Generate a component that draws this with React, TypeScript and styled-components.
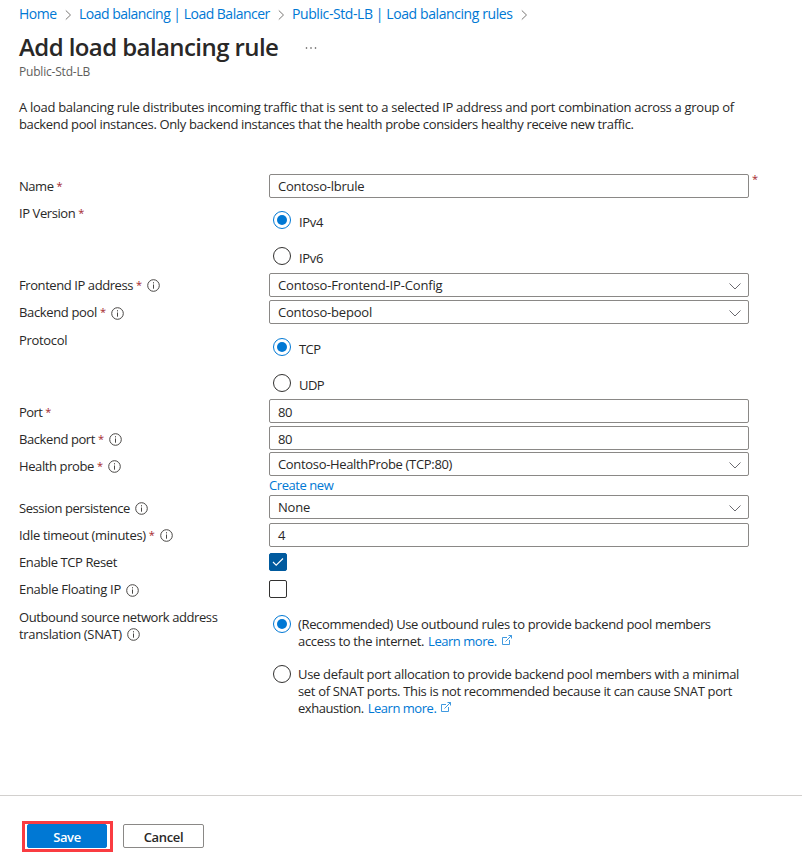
import React from "react";
import styled, { createGlobalStyle } from "styled-components";

const GlobalStyle = createGlobalStyle`
  * { box-sizing: border-box; }
  body {
    margin: 0;
    background: #fff;
    color: #292827;
    font: 400 13px/17px "Open Sans", "Noto Sans", sans-serif;
  }
`;

const Page = styled.div`
  width: 802px;
  height: 860px;
  display: flex;
  flex-direction: column;
  overflow: hidden;
`;

const Text = styled.span<{ $track?: number }>`
  letter-spacing: ${(p) => p.$track ?? -0.37}px;
  white-space: nowrap;
`;

const Breadcrumb = styled.nav`
  display: flex;
  align-items: center;
  height: 20px;
  margin: 3px 0 0 19px;
  font-size: 14px;
`;

const Crumb = styled.a<{ $track: number; $width: number }>`
  width: ${(p) => p.$width}px;
  letter-spacing: ${(p) => p.$track}px;
  white-space: nowrap;
  color: #0078d4;
`;

const CrumbArrow = styled.svg`
  width: 7px;
  height: 12px;
  margin: 4px 7px 0 8px;
  stroke: #797775;
  fill: none;
`;

const TitleRow = styled.div`
  display: flex;
  align-items: center;
  height: 34px;
  margin: 7px 0 0 19px;
`;

const Title = styled.h1`
  margin: 0;
  width: 286px;
  font-size: 24px;
  line-height: 34px;
  font-weight: 600;
  letter-spacing: -0.58px;
  white-space: nowrap;
`;

const MoreDots = styled.svg`
  width: 12px;
  height: 4px;
  margin-top: 2px;
  fill: #484644;
`;

const Subtitle = styled.div`
  height: 16px;
  margin: 0 0 0 19px;
  font-size: 12px;
  line-height: 16px;
  letter-spacing: -0.2px;
  color: #605e5c;
`;

const Description = styled.p`
  display: flex;
  flex-direction: column;
  margin: 19px 0 41px 19px;
`;

const Form = styled.form`
  flex: none;
  display: flex;
  flex-direction: column;
  height: 621px;
`;

const Row = styled.div<{ $height: number }>`
  display: grid;
  grid-template-columns: 250px 480px 1fr;
  height: ${(p) => p.$height}px;
  padding-left: 19px;
`;

const Label = styled.div<{ $top: number }>`
  padding-top: ${(p) => p.$top}px;
`;

const LabelLine = styled.div`
  display: flex;
  height: 17px;
`;

const Star = styled.span`
  width: 5px;
  margin-left: 3px;
  margin-right: 1px;
  font-size: 11px;
  line-height: 16px;
  color: #a4262c;
`;

const InfoSvg = styled.svg<{ $drop: number }>`
  width: 13px;
  height: 13px;
  margin: ${(p) => 2 + p.$drop}px 0 0 5px;
  stroke: #484644;
  fill: none;
`;

const Field = styled.div<{ $top?: number }>`
  padding-top: ${(p) => p.$top ?? 0}px;
`;

const Box = styled.div<{ $drop?: number }>`
  display: flex;
  justify-content: space-between;
  width: 480px;
  height: 24px;
  padding: ${(p) => 3 + (p.$drop ?? 0)}px 7px 0 8px;
  border: 1px solid #8a8886;
  border-radius: 2px;
`;

const Chevron = styled.svg`
  width: 12px;
  height: 7px;
  margin-top: 6px;
  stroke: #6b6a70;
  fill: none;
`;

const OuterStar = styled.span`
  margin-left: 3px;
  font-size: 11px;
  line-height: 10px;
  color: #a4262c;
`;

const RadioRow = styled.div<{ $height: number }>`
  display: flex;
  height: ${(p) => p.$height}px;
  padding-left: 4px;
`;

const RadioSvg = styled.svg`
  flex: none;
  width: 18px;
  height: 18px;
`;

const RadioText = styled.div<{ $left: number; $top: number }>`
  display: flex;
  flex-direction: column;
  padding: ${(p) => p.$top}px 0 0 ${(p) => p.$left}px;
`;

const InlineLine = styled.div`
  display: flex;
  height: 17px;
`;

const Link = styled.a<{ $track?: number; $gap?: number }>`
  margin-left: ${(p) => p.$gap ?? 0}px;
  letter-spacing: ${(p) => p.$track ?? -0.47}px;
  white-space: nowrap;
  color: #0078d4;
`;

const ExternalSvg = styled.svg`
  width: 10px;
  height: 10px;
  margin: 2px 0 0 5px;
  stroke: #2b8fdd;
  stroke-width: 0.9;
  fill: none;
`;

const CreateNew = styled.div`
  height: 17px;
  margin-top: 1px;
`;

const CheckBox = styled.div<{ $on?: boolean }>`
  width: 18px;
  height: 18px;
  border: 1px solid ${(p) => (p.$on ? "#005a9e" : "#323130")};
  border-radius: 2px;
  background: ${(p) => (p.$on ? "#005a9e" : "#fff")};
`;

const CheckSvg = styled.svg`
  display: block;
  width: 16px;
  height: 16px;
  stroke: #fff;
  fill: none;
`;

const Footer = styled.footer`
  flex: 1;
  display: flex;
  align-items: flex-start;
  padding: 25px 0 0 22px;
  border-top: 1px solid #d2d0ce;
`;

const SaveFrame = styled.div`
  width: 91px;
  height: 31px;
  margin-right: 10px;
  padding: 0 2px;
  border: 3px solid #fa3c41;
`;

const Button = styled.button<{ $primary?: boolean }>`
  display: block;
  width: ${(p) => (p.$primary ? 80 : 81)}px;
  height: 24px;
  margin-top: ${(p) => (p.$primary ? 0 : 3)}px;
  padding: 2px 0 0;
  border: 1px solid ${(p) => (p.$primary ? "#0078d4" : "#8a8886")};
  border-radius: 2px;
  background: ${(p) => (p.$primary ? "#0078d4" : "#fff")};
  color: ${(p) => (p.$primary ? "#fff" : "#292827")};
  font: 600 13px/17px "Open Sans", sans-serif;
  letter-spacing: -0.35px;
`;

const Arrow = () => (
  <CrumbArrow viewBox="0 0 7 12"><path d="M.8 1.5 5.5 6 .8 10.5" /></CrumbArrow>
);

const Info = ({ drop = 0 }: { drop?: number }) => (
  <InfoSvg $drop={drop} viewBox="0 0 13 13">
    <circle cx="6.5" cy="6.5" r="5.8" />
    <path d="M6.5 5.5v4.2M6.5 3.2v1.2" />
  </InfoSvg>
);

const Radio = ({ on }: { on?: boolean }) => (
  <RadioSvg viewBox="0 0 18 18">
    <circle cx="9" cy="9" r="8.5" fill="#fff" stroke={on ? "#0078d4" : "#323130"} />
    {on && <circle cx="9" cy="9" r="5" fill="#0078d4" />}
  </RadioSvg>
);

const External = () => (
  <ExternalSvg viewBox="0 0 10 10">
    <path d="M5 2.5H.5v7h7V5M3.5 6.5l6-6M6.5.5h3v3" />
  </ExternalSvg>
);

const Input = ({ value, track, drop }: { value: string; track?: number; drop?: number }) => (
  <Box $drop={drop}><Text $track={track}>{value}</Text></Box>
);

const Select = ({ value, track }: { value: string; track?: number }) => (
  <Box>
    <Text $track={track}>{value}</Text>
    <Chevron viewBox="0 0 12 7"><path d="M.5.5 6 6 11.5.5" /></Chevron>
  </Box>
);

type LabelProps = {
  text: string;
  top: number;
  track?: number;
  required?: boolean;
  info?: boolean;
  infoDrop?: number;
};
const FieldLabel = ({ text, top, track, required, info, infoDrop }: LabelProps) => (
  <Label $top={top}>
    <LabelLine>
      <Text $track={track}>{text}</Text>
      {required && <Star>*</Star>}
      {info && <Info drop={infoDrop} />}
    </LabelLine>
  </Label>
);

const RadioPair = ({ first, second, track }: { first: string; second: string; track: number }) => (
  <>
    <RadioRow $height={36}>
      <Radio on />
      <RadioText $left={8} $top={3}><Text $track={track}>{first}</Text></RadioText>
    </RadioRow>
    <RadioRow $height={24}>
      <Radio />
      <RadioText $left={8} $top={3}><Text $track={track}>{second}</Text></RadioText>
    </RadioRow>
  </>
);

export default function App() {
  return (
    <Page>
      <GlobalStyle />
      <Breadcrumb>
        <Crumb $width={38} $track={-0.52}>Home</Crumb>
        <Arrow />
        <Crumb $width={191} $track={-0.51}>Load balancing | Load Balancer</Crumb>
        <Arrow />
        <Crumb $width={221} $track={-0.41}>Public-Std-LB | Load balancing rules</Crumb>
        <Arrow />
      </Breadcrumb>
      <TitleRow>
        <Title>Add load balancing rule</Title>
        <MoreDots viewBox="0 0 12 4">
          <circle cx="1.5" cy="2" r=".8" /><circle cx="6" cy="2" r=".8" /><circle cx="10.5" cy="2" r=".8" />
        </MoreDots>
      </TitleRow>
      <Subtitle>Public-Std-LB</Subtitle>
      <Description>
        <Text $track={-0.295}>A load balancing rule distributes incoming traffic that is sent to a selected IP address and port combination across a group of</Text>
        <Text $track={-0.35}>backend pool instances. Only backend instances that the health probe considers healthy receive new traffic.</Text>
      </Description>
      <Form>
        <Row $height={27}>
          <FieldLabel text="Name" top={4} track={-0.45} required />
          <Field><Input value="Contoso-lbrule" track={-0.24} /></Field>
          <OuterStar>*</OuterStar>
        </Row>
        <Row $height={72}>
          <FieldLabel text="IP Version" top={4} track={-0.42} required />
          <Field $top={10}><RadioPair first="IPv4" second="IPv6" track={-0.35} /></Field>
        </Row>
        <Row $height={27}>
          <FieldLabel text="Frontend IP address" top={4} track={-0.42} required info />
          <Field><Select value="Contoso-Frontend-IP-Config" track={-0.17} /></Field>
        </Row>
        <Row $height={27}>
          <FieldLabel text="Backend pool" top={4} track={-0.35} required info infoDrop={1} />
          <Field><Select value="Contoso-bepool" track={-0.2} /></Field>
        </Row>
        <Row $height={72}>
          <FieldLabel text="Protocol" top={5} track={-0.33} />
          <Field $top={11}><RadioPair first="TCP" second="UDP" track={-0.6} /></Field>
        </Row>
        <Row $height={27}>
          <FieldLabel text="Port" top={5} track={-0.6} required />
          <Field><Input value="80" drop={1} /></Field>
        </Row>
        <Row $height={26}>
          <FieldLabel text="Backend port" top={5} track={-0.42} required info />
          <Field><Input value="80" drop={1} /></Field>
        </Row>
        <Row $height={43}>
          <FieldLabel text="Health probe" top={6} track={-0.4} required info />
          <Field>
            <Select value="Contoso-HealthProbe (TCP:80)" track={-0.33} />
            <CreateNew><Link $track={-0.43}>Create new</Link></CreateNew>
          </Field>
        </Row>
        <Row $height={28}>
          <FieldLabel text="Session persistence" top={5} track={-0.42} info />
          <Field><Select value="None" track={-0.2} /></Field>
        </Row>
        <Row $height={27}>
          <FieldLabel text="Idle timeout (minutes)" top={4} track={-0.31} required info />
          <Field><Input value="4" /></Field>
        </Row>
        <Row $height={27}>
          <FieldLabel text="Enable TCP Reset" top={4} track={-0.4} />
          <Field $top={3}>
            <CheckBox $on><CheckSvg viewBox="0 0 16 16"><path d="M3 8l3.2 3.2L13 4.5" strokeWidth="1.1" /></CheckSvg></CheckBox>
          </Field>
        </Row>
        <Row $height={28}>
          <FieldLabel text="Enable Floating IP" top={4} track={-0.29} info infoDrop={1} />
          <Field $top={3}><CheckBox /></Field>
        </Row>
        <Row $height={130}>
          <Label $top={4}>
            <LabelLine><Text $track={-0.42}>Outbound source network address</Text></LabelLine>
            <LabelLine><Text $track={-0.34}>translation (SNAT)</Text><Info /></LabelLine>
          </Label>
          <Field $top={10}>
            <RadioRow $height={50}>
              <Radio on />
              <RadioText $left={7} $top={1}>
                <Text $track={-0.345}>(Recommended) Use outbound rules to provide backend pool members</Text>
                <InlineLine>
                  <Text $track={-0.33}>access to the internet.</Text>
                  <Link $gap={4}>Learn more.</Link>
                  <External />
                </InlineLine>
              </RadioText>
            </RadioRow>
            <RadioRow $height={60}>
              <Radio />
              <RadioText $left={7} $top={1}>
                <Text $track={-0.32}>Use default port allocation to provide backend pool members with a minimal</Text>
                <Text $track={-0.33}>set of SNAT ports. This is not recommended because it can cause SNAT port</Text>
                <InlineLine>
                  <Text $track={-0.45}>exhaustion.</Text>
                  <Link $gap={4}>Learn more.</Link>
                  <External />
                </InlineLine>
              </RadioText>
            </RadioRow>
          </Field>
        </Row>
      </Form>
      <Footer>
        <SaveFrame><Button $primary type="button">Save</Button></SaveFrame>
        <Button type="button">Cancel</Button>
      </Footer>
    </Page>
  );
}
